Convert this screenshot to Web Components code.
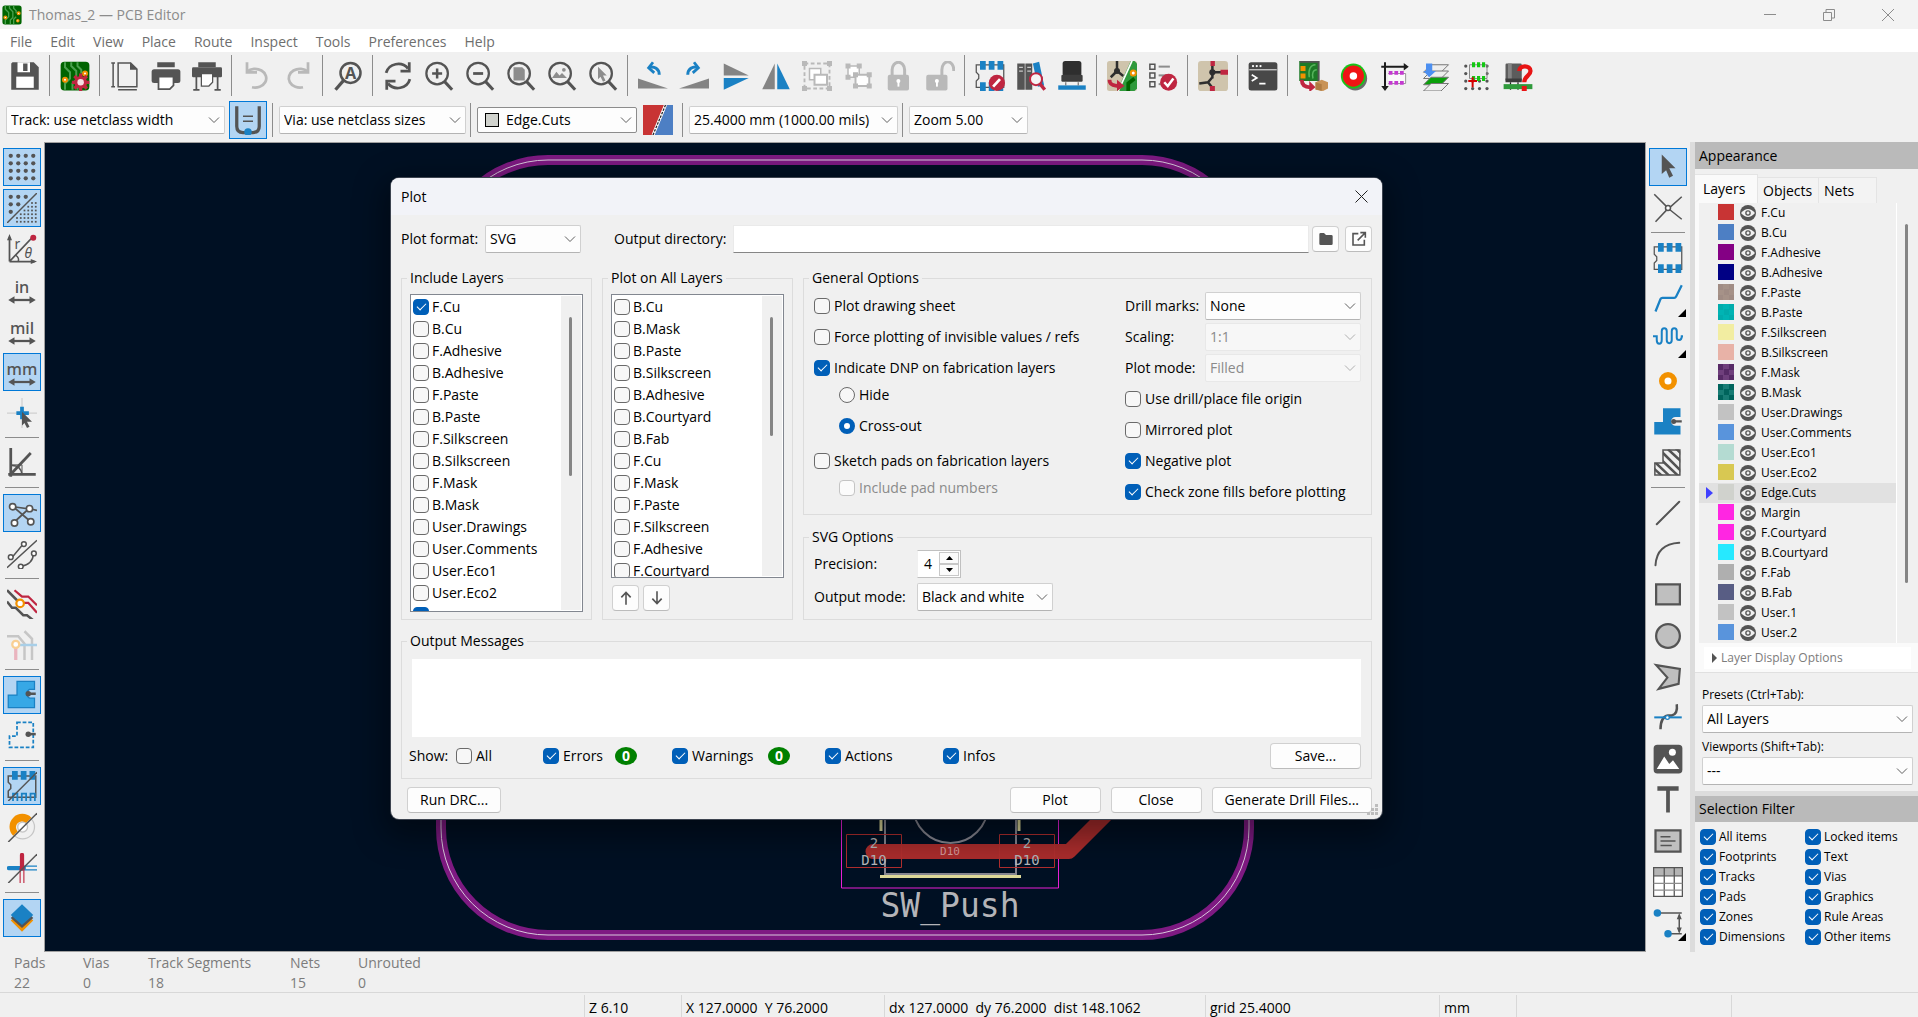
<!DOCTYPE html>
<html lang="en">
<head>
<meta charset="utf-8">
<title>Thomas_2 — PCB Editor</title>
<style>
  html, body { margin: 0; height: 100%; overflow: hidden; }
  body { font: 14px/20px "Open Sans", "Noto Sans", "Liberation Sans", sans-serif; color: #1a1a1a; background: #f0f0f0; }
</style>
</head>
<body>
<pcb-editor></pcb-editor>

<script>
/* ---------- icons, all on a 24 x 24 grid ---------- */
const G = '#545454', B = '#1a81c4', D = '#b9b9b9', R = '#bf2641', O = '#f29100';

const line = (d, c = G, w = 2, extra = '') =>
  `<path d="${d}" fill="none" stroke="${c}" stroke-width="${w}" ${extra}/>`;
const shape = (d, c = G) => `<path d="${d}" fill="${c}"/>`;
const box = (x, y, w, h, c = G, rx = 0) =>
  `<rect x="${x}" y="${y}" width="${w}" height="${h}" rx="${rx}" fill="${c}"/>`;
const dot = (x, y, r, c = G) => `<circle cx="${x}" cy="${y}" r="${r}" fill="${c}"/>`;
const ring = (x, y, r, c = G, w = 2, f = 'none') =>
  `<circle cx="${x}" cy="${y}" r="${r}" fill="${f}" stroke="${c}" stroke-width="${w}"/>`;
const lens = inner => ring(10.5, 10, 8.6, G, 1.8) + line('M16.500 16.500L22.500 23', G, 2.4) + `<g transform="translate(-2 .5)">${inner}</g>`;

// green board tile with a few traces
const board = box(0.5, 0.5, 23, 23, '#006400', 3) +
  line('M4 1v4l4 4v5l-4 4v5M9 1v3l4 4v7l-3 3v5M14 1v3l3 3v3M17 14l-3 3v6', '#4aa04e', 1.6) +
  ring(20, 10, 1.6, O, 1.6, '#fff') + ring(4, 15, 1.6, O, 1.6, '#fff') + ring(19, 19, 1.4, O, 1.4, '#fff');

const chip = c =>
  line('M1 3h22v18H1v-5l2-2v-3L1 9z', G, 1) +
  [4, 11, 18].map(x => box(x, 0, 4.6, 7, c) + box(x, 17, 4.6, 7, c)).join('');

const unit = t => `<text x="12" y="14.500" text-anchor="middle" font-family="Noto Sans, sans-serif" font-weight="500" font-size="13" fill="${G}">${t}</text>` +
  line('M4 20h16', G, 1.8) + shape('M1 20l5-3v6zM23 20l-5-3v6z');

const grid = (xs, ys, r, keep = () => true) =>
  ys.flatMap(y => xs.filter(x => keep(x, y)).map(x => dot(x, y, r))).join('');

const lock = (shackle, x = 0) => line(shackle, D, 2.4) + box(3 + x, 11, 17, 12.5, D, 1.5) +
  dot(11.5 + x, 16, 1.6, '#fff') + box(10.8 + x, 16, 1.5, 4.5, '#fff');

const zone = (fill, edge) => `<path d="M8 1h14v6.500h-4a4 4 0 0 0 0 7h4V22H1V12h7z" fill="${fill}" stroke="${edge}" stroke-width="1"/>` +
  dot(17, 11, 2.2) + box(17, 10, 6, 2);

const ICONS = {
  app: board,
  save: shape('M2 1h17l4 4v18H1V2z') + box(6, 1, 10, 8, '#fff') + box(10.500, 2, 3.500, 6) + box(5, 12.500, 14, 9, '#fff'),
  setup: board + dot(16.500, 17, 5, R) + line('M16.500 10v14M9.500 17h14M11.500 12l10 10M21.500 12l-10 10', R, 2.6) + dot(16.500, 17, 2.600, '#f3e0e4'),
  page: line('M6.500 1.500h10l5 5v14h-15z', G, 1.2) + shape('M16 1l6 6h-6z') + line('M2.500 1.500v19M1 1.500h3M1 20.500h3M6.500 22.900h15', G, 1.2),
  print: box(5, 1, 14, 4) + box(0.500, 6.500, 23, 11, G, 2) + `<path d="M6 12.500h12v7l-3 3H6z" fill="#fff" stroke="${G}" stroke-width="1.400"/>`,
  plotter: box(5, 1, 14, 4) + box(0, 5, 24, 8, G, 1) + line('M3.500 12v11M20.500 12v11M1 23h5M18 23h5', G, 1.4) + `<path d="M7.500 10h9v7l-3 3h-6z" fill="#fff" stroke="${G}"/>`,
  undo: line('M4 8.500h0a9 7.500 0 1 1 4 12.500', D, 2.2) + line('M4 1v8h8', D, 2.2),
  redo: line('M20 8.500h0a9 7.500 0 1 0-4 12.500', D, 2.2) + line('M20 1v8h-8', D, 2.2),
  find: ring(14, 9.500, 8, G, 2) + line('M8.500 15.500L2 23', G, 2.6) +
    `<text x="14" y="14.500" text-anchor="middle" font-family="Noto Sans, sans-serif" font-weight="700" font-size="13" fill="${G}">A</text>`,
  refresh: line('M2.500 9.500A10 9.500 0 0 1 20 6M21.500 14.500A10 9.500 0 0 1 4 18', G, 2.2) + line('M21 1v7h-7M3 23v-7h7', G, 2.2),
  zoomIn: lens(line('M12.500 5.500v8M8.500 9.500h8', G, 2)),
  zoomOut: lens(line('M8.500 9.500h8', G, 2.2)),
  zoomPage: lens(shape('M8 4.500h7l2 2v8.500H8z', '#8d8d8d')),
  zoomObjects: lens(shape('M6 13l3.500-5 2.500 3 2-2 4 4z', '#8d8d8d') + dot(15.500, 6.500, 1.500, '#8d8d8d')),
  zoomSelect: lens(shape('M10 4l7 7h-3l2 4-2 1-2-4-2 2z', '#8d8d8d')),
  rotateLeft: shape('M0 14v8h24z', '#848484') + line('M17 11c0-5-4-7-8-6', B, 2.4) + line('M12 1L8.500 5.500l4.500 4', B, 2.2),
  rotateRight: shape('M24 14v8H0z', '#848484') + line('M7 11c0-5 4-7 8-6', B, 2.4) + line('M12 1l3.500 4.500-4.500 4', B, 2.2),
  flip: shape('M3 2v9.500h20z', '#848484') + shape('M3 23v-9.500h20z', B),
  mirror: shape('M11 2v20.500H1z', '#848484') + shape('M13 2v20.500h10z', B),
  group: line('M2 2h20v20H2z', D, 1.5, 'stroke-dasharray="3 2"') + `<path d="M6 6h9v9H6z" fill="#fff" stroke="${D}" stroke-width="1.200"/><path d="M10 11h10v8H10z" fill="#fff" stroke="${D}" stroke-width="1.600"/>` +
    box(0, 0, 4, 4, D) + box(20, 0, 4, 4, D) + box(0, 20, 4, 4, D) + box(20, 20, 4, 4, D),
  ungroup: `<path d="M4 4h9v9H4z" fill="#fff" stroke="${D}" stroke-width="1.200"/><path d="M10 11h11v9H10z" fill="#fff" stroke="${D}" stroke-width="1.600"/>` +
    [[2, 2], [11, 2], [2, 11], [8, 9], [19, 9], [8, 18], [19, 18]].map(p => box(p[0], p[1], 4, 4, D)).join(''),
  lock: lock('M6.500 12V7a5 6 0 0 1 10 0v5'),
  unlock: lock('M13.500 12V7a4.500 6 0 0 1 9.500 0v1', -2),
  footprintEdit: chip(B) + dot(17.500, 17.500, 6.500, R) + line('M14.500 20.500l5.500-6', '#fff', 2.2),
  library: box(1, 2, 6, 21) + box(7.500, 2, 5.500, 21) + line('M2.500 5h3M2.500 8h3M9 5h3M9 8h3', '#c8c8c8', 1) + shape('M13.500 2l5-1.500 4 19-5 1z', B) +
    ring(16, 14.500, 4.800, R, 1.6, '#f4f4f4') + line('M19 18l4 5', R, 2.8),
  footprint: box(4.500, 0, 15, 12, '#2e2e2e', 2) + box(3.500, 11, 17, 5.500, '#3c3c3c', 1) + box(1, 19.500, 22, 3.500, B) + line('M7 17v2.500M17 17v2.500', '#777', 1),
  updatePcb: box(0, 0, 24, 24, '#cfc4ac', 2) + shape('M19 0h3l2 2v20l-2 2H8z', '#2f9a3c') + line('M8 0v8l5 4M8 8l-5 5', '#2e2e2e', 2) + dot(8, 8, 2.400, '#2e2e2e') +
    line('M20 0L9 24', '#fff', 1.4) + line('M17 24v-6l5-4', '#006400', 3) + ring(21, 9.500, 2, O, 1.6, '#fff') +
    line('M2 15c0 4 3 5 8 5', R, 3) + shape('M8 15l6 5-6 4z', R),
  drc: [2.500, 9.500, 16.500].map(y => line(`M1.500 ${y}h4v4h-4z`, G, 1.2) + line(`M8.500 ${y + 2}h9`, '#8d8d8d', 1.6)).join('') +
    dot(16.500, 17, 6.800, R) + line('M13 17l2.800 3 4.500-6', '#fff', 2),
  schematic: box(0, 0, 24, 24, '#cfc4ac', 2.500) + line('M11.500 3v11M1 18l7-1 3.500-4M11.500 9h8M8 17l4 5', '#2e2e2e', 2) + dot(11.500, 9, 2.500, '#2e2e2e') +
    box(10, 0, 3.500, 4, R) + box(18, 7, 6, 4, R) + box(9.500, 20, 4, 4, R),
  console: box(0.500, 1, 23, 22.500, '#484848', 2) + line('M1 7h22', '#cfcfcf', 1) + dot(4, 4, 0.900, '#fff') + dot(7, 4, 0.900, '#fff') + dot(10, 4, 0.900, '#fff') +
    line('M3 11l4 2.500-4 2.500M9 18h5', '#fff', 1.4),
  fabrication: box(1, 0, 15, 16, '#1d7a26') + line('M1.500 0.500h15v16', '#555', 1.6) + line('M14 3c-4 0-6 4-5 10M15 7c-3 0-4 3-3 7', '#58b45e', 1.2) + box(2, 4, 4, 4, O) + box(2, 10, 4, 4, O) +
    line('M3 15c0 4 2 6 7 6', R, 3) + shape('M9 16l5 5-5 4z', R) + shape('M14 17l5-2 5 2v5l-4 2-6-1z', '#c99356') + shape('M14 17l5 1.500V24l-5-1.500z', '#b07c42'),
  teardrop: dot(13, 14, 9.500, '#6c6c6c') + dot(11.500, 12, 10, '#19c319') + dot(11.500, 12, 8.500, '#f01414') + dot(11.500, 12, 3, '#fff'),
  origin: line('M1 4.500h19M4 1v20', '#1c1c1c', 1.6) + shape('M23 4.500l-4-3v6zM4 24l-3-4h6z', '#1c1c1c') + box(6.500, 9, 14, 9, '#fafafa') + line('M6.500 10h14v8h-14', '#999', 0.8) +
    [7, 11.500, 16].map(x => box(x, 8, 3, 3, '#c33ad0') + box(x, 16, 3, 3, '#c33ad0')).join(''),
  stackup: [[3, '#eee'], [8, '#eee'], [13, '#0aa00a'], [18, '#eee']].map(([y, c]) =>
    `<path d="M8 ${y}h14l-6 6H2z" fill="${c}" stroke="#777" stroke-width="0.800"/>`).join('') + shape('M4 2h5v6h3l-5.500 5L2 8h2z', '#4c8ff0'),
  array: grid([3, 8.500, 14, 20], [4, 10, 16, 22], 1.300) + box(6, 3, 13, 10, '#ebebeb') + line('M6 3h14v11H6z', '#888', 0.8) +
    [8, 12, 16].map(x => box(x, 1, 2.500, 4, '#12c812') + box(x, 12, 2.500, 4, '#12c812')).join('') + line('M8.500 13v8M5 16h7', '#d40000', 1.6),
  partHelp: box(2, 2, 13, 14, '#5c5c5c', 1) + box(4, 2, 3, 14, '#848484') + box(2, 14, 13, 3, '#3c3c3c') + line('M6 17v6M12 17v6', '#222', 1) + box(0.500, 18.500, 23, 4, '#2f9a3c') +
    line('M13 8c0-5 9-5 9 0 0 4-5 4-5 9', '#e81414', 3.4) + box(15, 20, 4, 4, '#e81414'),

  autoWidth: line('M3 1v16q0 5 5 5h8q5 0 5-5V1', G, 2.6) + line('M8 9h8M8 13h8', G, 1.2) + dot(12, 21.500, 3, B),
  layerPair: shape('M0 0h19L9 24H0z', '#c83434') + shape('M19 0h5v24H9z', '#4d7fc4') + line('M18 0L8 24', '#fff', 2.4) + line('M18 0L8 24', '#222', 1, 'stroke-dasharray="2 1"'),

  gridDots: grid([3, 9, 15, 21], [3, 9, 15, 21], 1.700),
  gridOverride: grid([3, 9, 15], [3, 9, 15], 1.700, (x, y) => x + y < 20) + line('M0 24L24 0', G, 1.2) +
    [8, 11, 14, 17, 20, 23].map(x => [8, 11, 14, 17, 20, 23].filter(y => x + y > 27).map(y => box(x - 0.700, y - 0.700, 1.400, 1.400)).join('')).join(''),
  polar: line('M2 22V3M2 22h20M2 22L20 3', G, 1.4) + shape('M2 0l2 5H0zM24 22l-5 2v-4z') + dot(21, 3, 2.400, R) + line('M7 17q3 2 2 5', G, 1.2) +
    `<text x="6" y="12" font-family="Noto Sans, sans-serif" font-size="11" fill="${G}">r</text><text x="14" y="19" font-family="Noto Sans, sans-serif" font-style="italic" font-size="11" fill="${G}">θ</text>`,
  inches: unit('in'), mils: unit('mil'), millimetres: unit('mm'),
  cursor: line('M0 12h24M12 0v24', '#cfcfcf', 1) + line('M7.500 12h10M12 7v10', B, 3) + shape('M12 11l8 8h-4l2 4-2 1-2-4-2 2z'),
  angle: line('M3 0v23M1 21h22', G, 2.2) + line('M3 21L19 4', G, 2.2) + line('M4 14q7 0 8 7', G, 1.2) + line('M4 13.500h8V21', G, 0.8),
  ratsnest: line('M5 7l15 2 4 1M5 7l14 12M18 8L5 20', G, 1.4) + ring(4.500, 7, 2.500, G, 1.3, '#fff') + ring(18, 8.500, 2.500, G, 1.3, '#fff') + ring(6, 20, 2.500, G, 1.3, '#fff') + ring(19, 19, 2.500, G, 1.3, '#fff'),
  curvedRats: line('M3 16L13 4M0 23L24 1', G, 1.2) + ring(13.500, 4, 1.900, G, 1.2, '#fff') + ring(3, 14.500, 1.900, G, 1.2, '#fff') +
    line('M21 12q0 8-10 10', G, 1.2) + ring(21.500, 11.500, 1.900, G, 1.2, '#fff') + ring(11, 22, 1.900, G, 1.2, '#fff'),
  netTracks: line('M6 1l6 5h5l7 7M12 11h5l7 8', R, 1.8) + line('M0 1l9 9M0 10l4 5h3l6 6h3l5 4', G, 2) + ring(10.500, 11.500, 3, O, 1.8, '#fff'),
  netFade: line('M0 5h9l5 6v13M14 1l6 6v17', '#c6c6c6', 2) + line('M7 12v12', '#eab4be', 2.6) + line('M8 12h16', '#a8cfe8', 2) + ring(7, 11.500, 2.800, '#f9cf93', 1.8, '#fff'),
  zoneFill: zone('#37a8e6', B),
  zoneOutline: line('M8 1h13v20H2V12h6z', B, 1.4, 'stroke-dasharray="3 1.500"') + dot(17, 10.500, 2.200) + box(17, 9.500, 6, 2),
  padSketch: line('M1 4h22v17H1v-5l2-2v-3L1 9z', G, 1.2) + [4, 11, 18].map(x => box(x, 0, 4.600, 7, B) + line(`M${x + 0.800} 24v-6h3.500v6`, B, 1.4)).join('') + line('M1 24L24 1', G, 1.2),
  viaSketch: ring(12.500, 12, 9.500, '#c6c6c6', 1) + shape('M5 19A10 10 0 0 1 19.500 4.500L15 9a4.500 4.500 0 0 0-6.500 6.500z', O) +
    ring(12.500, 12, 4, '#c6c6c6', 1) + dot(12.500, 12, 3, '#fff') + line('M1 24L24 1', G, 1.2),
  trackSketch: line('M1.500 12h12', B, 3.4, 'stroke-linecap="round"') + line('M12 10.500h12M12 13.500h12', B, 0.9) + line('M12 1.500v11', R, 3.4, 'stroke-linecap="round"') + line('M10.500 12v12M13.500 12v12', R, 0.9) + line('M1 24L24 1', G, 1.2),
  layersPanel: shape('M12 6l9 8-9 9-9-9z', O) + shape('M12 3l9 9-9 8-9-8z') + shape('M12 1l9 8.500-9 8-9-8z', B),

  select: shape('M7 2l11 11h-5l3 6-3 1.500-2.500-6L7 17.500z'),
  crossProbe: line('M1 1l9.500 9.500M23 3l-9.500 8.500M2 23l9-9.500M23 21l-10-8', G, 1.2) + ring(12, 12, 2, G, 1.2, '#fff'),
  footprintAdd: chip(B),
  route: line('M2 22l4-10q.5-1 1.500-1h9.500q1 0 1.500-1L23 1', B, 1.8),
  tune: line('M0 9h3v3q0 3 2 3t2-3V5q0-2.500 2-2.500T11 5v7q0 2.500 2 2.500t2-2.500V5q0-2.500 2-2.500T19 5v5q0 2 2 2t2-3h1', B, 1.6),
  via: ring(12, 12, 5, O, 4.4, '#fff'),
  zoneAdd: shape('M8 1h14v7h-4a3.500 3.500 0 0 0 0 7h4v7H1V12h7z', B) + dot(16.500, 11.500, 2) + box(17, 10.600, 6, 1.800),
  keepout: `<clipPath id="k"><path d="M8 1h14v21H1V12h7z"/></clipPath><g clip-path="url(#k)">` + line('M-2 8l18 17M3 6l19 18M6 2l18 18M12 1l14 13M18 0l8 8M-2 14l10 9', G, 2) + '</g>' + line('M8 1.500h13.500v20H1.500V12H8z', G, 1.2),
  line: line('M3 21L21 3', G, 1.6, 'stroke-linecap="round"'),
  arc: line('M2 21Q3 4 21 3', G, 1.6, 'stroke-linecap="round"'),
  rect: `<path d="M2.500 3.500h19v16h-19z" fill="#bfbfbf" stroke="${G}" stroke-width="1.800"/>`,
  circle: ring(12, 12, 9.500, G, 1.8, '#bfbfbf'),
  polygon: `<path d="M2.500 2.500l19 3-1 12-16 4 7-9z" fill="#bfbfbf" stroke="${G}" stroke-width="1.700"/>`,
  bezier: line('M19 1q1 8-4 9h-3q-6 1-6 11', G, 2) + line('M1 11.500h22', B, 1.6) + ring(11.500, 11.500, 1.500, B, 1, '#fff'),
  image: box(0.500, 0.500, 23, 23, G, 3) + dot(15.500, 6.500, 2.800, '#fff') + shape('M3 20l6-10 4 6 3-3 5 7z', '#fff'),
  text: shape('M3.500 1h17v3.500h-7V22h-3V4.500h-7z'),
  textbox: `<path d="M2 3.500h20v17H2z" fill="#bfbfbf" stroke="${G}" stroke-width="1.800"/>` + line('M6 8.500h8M6 12h12M6 15.500h9', G, 1.2),
  table: box(0.500, 0.500, 23, 23, '#fff') + box(0.500, 0.500, 23, 6, '#b4b4b4') + line('M.5.5h23v23H.5zM.5 7h23M9 0v24M17 0v24', G, 1) + line('M.5 13h23M.5 18.500h23', '#8d8d8d', 1),
  dimension: line('M4 4h19M11 20.500h12M21 6v13', G, 1.2) + shape('M21 4l2 5h-4zM21 20.500l2-5h-4z') + dot(3.500, 4, 3, B) + dot(12, 20.500, 3, B),

  folder: shape('M2 5q0-2 2-2h5l3 3h8q2 0 2 2v11q0 2-2 2H4q-2 0-2-2z'),
  external: line('M11 4H3v17h17v-8', G, 2.4) + line('M10 14L21 3M14 2.500h7.500V10', G, 2.4),
  up: line('M12 22V4M5 11l7-7.500 7 7.500', G, 2.4),
  down: line('M12 2v18M5 13l7 7.500 7-7.500', G, 2.4),
  eye: dot(12, 12, 12) + shape('M1.500 12q10.500-12 21 0-10.500 12-21 0z', '#f0f0f0') + ring(12, 12, 3.200, G, 2, '#f0f0f0'),
};

const icon = (name, size) =>
  `<svg width="${size}" height="${size}" viewBox="0 0 24 24" aria-hidden="true">${ICONS[name]}</svg>`;

const BASE = `
  *{ box-sizing:border-box; }
  svg{ display:block; flex:none; }
  button, input, select, textarea{ font:inherit; color:inherit; margin:0; }
`;

/* Base class: subclasses return css() and html() */
class Widget extends HTMLElement {
  connectedCallback() {
    if (this.shadowRoot) return;
    this.attachShadow({ mode: 'open' }).innerHTML = `<style>${BASE}${this.css()}</style>${this.html()}`;
  }
  attr(name, fallback = '') { return this.getAttribute(name) || fallback; }
}

/* <tool-button icon label [pressed] [disabled] [menu]> */
customElements.define('tool-button', class extends Widget {
  css() {
    return `
      :host{ display:grid; place-items:center; width:41px; height:41px; flex:none; }
      button{ position:relative; display:grid; place-items:center; width:38px; height:38px; padding:0; border:1px solid transparent; background:none; }
      button[aria-pressed=true]{ background:#b3d5f3; border-color:#0078d7; }
      .corner{ position:absolute; right:0; bottom:0; border:4px solid; border-color:transparent #000 #000 transparent; }`;
  }
  html() {
    return `<button type="button" aria-label="${this.attr('label')}" aria-pressed="${this.hasAttribute('pressed')}"${this.hasAttribute('disabled') ? ' disabled' : ''}>
      ${icon(this.attr('icon'), 30)}${this.hasAttribute('menu') ? '<span class="corner"></span>' : ''}</button>`;
  }
});

/* <tool-strip tools="save | setup ..."> : "|" is a separator, "*" pressed, "!" disabled, "+" has a palette */
customElements.define('tool-strip', class extends Widget {
  css() {
    return `
      :host{ display:flex; flex:none; padding:3px 4px; background:#f0f0f0; }
      :host([vertical]){ flex-direction:column; align-items:center; width:44px; padding:4px 0; }
      i{ display:flex; flex:none; width:9px; height:41px; justify-content:center; }
      i::after{ content:""; width:1px; background:#8c8c8c; }
      :host([vertical]) i{ width:34px; height:9px; align-items:center; }
      :host([vertical]) i::after{ width:34px; height:1px; }`;
  }
  html() {
    return this.attr('tools').trim().split(/\s+/).map(t => {
      if (t === '|') return '<i></i>';
      const name = t.replace(/[*!+]/g, '');
      return `<tool-button icon="${name}" label="${name}"${t.includes('*') ? ' pressed' : ''}${t.includes('!') ? ' disabled' : ''}${t.includes('+') ? ' menu' : ''}></tool-button>`;
    }).join('');
  }
});

/* <combo-box label value [name] [disabled] [swatch]> */
customElements.define('combo-box', class extends Widget {
  css() {
    return `
      :host{ display:flex; align-items:center; }
      label{ flex:none; width:var(--label-width, auto); margin-right:var(--label-gap, 0); }
      .box{ flex:1; display:grid; min-width:0; height:var(--combo-height, 28px); }
      .box > *{ grid-area:1/1; }
      select{ appearance:none; width:100%; padding:0 24px 0 4px; border:1px solid #d0d0d0; border-bottom-color:#b4b4b4; border-radius:2px; background:#fdfdfd; color:#000; opacity:1; }
      :host([swatch]) select{ padding-left:28px; border-color:#8c8c8c; }
      select:disabled{ background:#f7f7f7; border-color:#e8e8e8; color:#8a8a8a; }
      svg{ align-self:center; justify-self:end; margin-right:5px; pointer-events:none; }
      b{ align-self:center; width:14px; height:14px; margin-left:8px; border:1px solid #000; background:var(--swatch); pointer-events:none; }`;
  }
  html() {
    const name = this.attr('name');
    return `${name ? `<label for="c">${name}</label>` : ''}
      <span class="box"><select id="c"${name ? '' : ` aria-label="${this.attr('label', this.attr('value'))}"`}${this.hasAttribute('disabled') ? ' disabled' : ''}><option>${this.attr('value')}</option></select>
      <svg width="12" height="12" viewBox="0 0 12 12"><path d="M1 3.500l5 5 5-5" fill="none" stroke="${this.hasAttribute('disabled') ? '#b0b0b0' : '#606060'}"/></svg>
      ${this.hasAttribute('swatch') ? `<b style="--swatch:${this.attr('swatch')}"></b>` : ''}</span>`;
  }
});

/* <check-box [checked] [disabled] [radio] [label]>Label</check-box> */
customElements.define('check-box', class extends Widget {
  css() {
    return `
      :host{ display:flex; align-items:center; }
      label{ display:flex; align-items:center; gap:var(--check-gap, 4px); white-space:nowrap; }
      input{ appearance:none; flex:none; display:grid; place-items:center; width:16px; height:16px; border:1px solid #6a6a6a; border-radius:4px; background:#f7f7f7; }
      input:checked{ background:#005fb8; border-color:#005fb8; }
      input[type=checkbox]:checked::after{ content:""; width:8px; height:4px; margin-top:-3px; border:solid #fff; border-width:0 0 1px 1px; transform:rotate(-45deg); }
      input[type=radio]{ border-radius:50%; }
      input[type=radio]:checked{ background:#fff; border-width:5px; }
      input:disabled{ border-color:#c4c4c4; background:#fbfbfb; }
      :host([disabled]) label{ color:#8a8a8a; }`;
  }
  html() {
    const type = this.hasAttribute('radio') ? 'radio' : 'checkbox';
    const label = this.attr('label');
    return `<label><input type="${type}"${label ? ` aria-label="${label}"` : ''}${this.hasAttribute('checked') ? ' checked' : ''}${this.hasAttribute('disabled') ? ' disabled' : ''}><slot></slot></label>`;
  }
});

/* <group-box name="General Options">...</group-box> */
customElements.define('group-box', class extends Widget {
  css() {
    return `
      :host{ display:grid; min-width:0; }
      fieldset{ min-width:0; margin:0; padding:0; border:1px solid #dcdcdc; }
      legend{ margin-left:5px; padding:0 3px; line-height:20px; }
      div{ padding:var(--pad, 0); }`;
  }
  html() { return `<fieldset><legend>${this.attr('name')}</legend><div><slot></slot></div></fieldset>`; }
});

/* <push-button [icon]>Label</push-button> */
customElements.define('push-button', class extends Widget {
  css() {
    return `
      :host{ display:grid; height:26px; min-width:91px; }
      :host([icon]){ min-width:27px; }
      button{ display:grid; place-items:center; padding:0 12px; border:1px solid #d0d0d0; border-bottom-color:#bcbcbc; border-radius:4px; background:#fdfdfd; color:#000; line-height:20px; white-space:nowrap; }
      :host([icon]) button{ padding:0; }`;
  }
  html() {
    const name = this.attr('icon');
    return `<button type="button"${name ? ` aria-label="${this.attr('label', name)}"` : ''}>${name ? icon(name, 16) : '<slot></slot>'}</button>`;
  }
});

/* <layer-checks layers="F.Cu,B.Cu" checked="F.Cu" [next="Edge.Cuts"]> scrolling check list; next = row that only peeks in */
customElements.define('layer-checks', class extends Widget {
  css() {
    return `
      :host{ display:flex; height:var(--list-height); overflow:hidden; border:1px solid #828790; background:#fff; }
      .rows{ flex:1; padding:1px 0 0 2px; overflow:hidden; --check-gap:3px; }
      check-box{ height:22px; }
      .bar{ width:20px; margin:1px; padding:21px 0 0 8px; background:#f0f0f0; }
      .bar::before{ content:""; display:block; width:3px; height:var(--thumb); border-radius:2px; background:#858585; }`;
  }
  html() {
    const on = this.attr('checked').split(',');
    const next = this.attr('next');
    const rows = this.attr('layers').split(',').map(l => `<check-box${on.includes(l) ? ' checked' : ''}>${l}</check-box>`).join('');
    return `<div class="rows">${rows}${next ? `<check-box checked label="${next}"></check-box>` : ''}</div><div class="bar"></div>`;
  }
});

customElements.define('plot-dialog', class extends Widget {
  css() {
    return `
      :host{ display:block; background:#f0f0f0; border-radius:8px; overflow:hidden; color:#000; box-shadow:0 0 0 1px #3d4450, 0 10px 30px 8px rgba(0,0,0,.4); }
      header{ display:flex; align-items:center; justify-content:space-between; height:37px; padding:0 10px; background:#f2f3f8; }
      header button{ padding:4px; border:0; background:none; }
      .body{ padding:10px 10px 6px; }
      .row{ display:flex; align-items:center; }
      .format{ width:180px; --label-gap:6px; --label-width:78px; }
      .dir{ flex:none; width:119px; margin-left:33px; }
      .path{ flex:1; min-width:0; height:28px; padding:0 4px; border:1px solid #eaeaea; border-bottom-color:#868686; background:#fff; }
      .path + *{ margin:0 6px 0 3px; }
      .columns{ display:grid; grid-template-columns:191px 191px 1fr; gap:10px; margin-top:15px; }
      .layers{ --pad:6px 8px 7px; --list-height:318px; --thumb:159px; }
      .all{ --pad:6px 8px 7px; --list-height:284px; --thumb:119px; }
      .move{ display:flex; gap:4px; padding:7px 1px 0; }
      .options{ display:flex; flex-direction:column; gap:12px; }
      .general{ --pad:2px 10px 7px; }
      .two{ display:grid; grid-template-columns:1fr 236px; }
      .left{ display:grid; grid-template-rows:31px 31px 31px 23px 39px 31px 23px; }
      .right{ display:grid; grid-auto-rows:31px; --label-width:80px; }
      .sub{ margin-left:25px; }
      .svg{ --pad:3px 10px 8px; --label-width:103px; }
      .precision{ display:flex; align-items:center; margin-bottom:5px; }
      .precision label{ width:103px; }
      .spin{ display:flex; width:44px; height:28px; border:1px solid #c0c0c0; border-left-color:#f0f0f0; background:#fff; }
      .spin input{ width:20px; padding:0; border:0; text-align:center; background:none; }
      .spin span{ display:grid; width:22px; padding:1px; }
      .spin button{ display:grid; place-items:center; padding:0; border:1px solid #c8c8c8; background:#fbfbfb; }
      .mode{ width:239px; }
      .messages{ margin-top:11px; --pad:8px 10px 9px 7px; }
      textarea{ display:block; width:calc(100% - 3px); height:78px; margin-left:3px; padding:4px; border:0; background:#fff; resize:none; }
      .show{ display:flex; align-items:center; height:26px; margin-top:6px; }
      .show > :first-child{ width:47px; }
      .show > :last-child{ margin-left:auto; }
      .all-msg{ width:87px; }
      .errors{ width:72px; }
      .warnings{ width:96px; }
      .actions{ width:118px; }
      .badge{ width:22px; height:18px; margin-right:35px; border-radius:50%; background:#008000; color:#fff; font-weight:700; line-height:18px; text-align:center; }
      footer{ display:flex; gap:10px; padding:8px 0 0 6px; }
      footer :first-child{ margin-right:auto; }
      .grip{ position:absolute; right:4px; bottom:4px; }`;
  }
  html() {
    return `
      <header>Plot<button type="button" aria-label="Close"><svg width="13" height="13" viewBox="0 0 13 13"><path d="M.5.5l12 12M12.500.5l-12 12" stroke="#222" fill="none"/></svg></button></header>
      <div class="body">
        <div class="row">
          <combo-box class="format" name="Plot format:" value="SVG"></combo-box>
          <label class="dir" for="dir">Output directory:</label><input class="path" id="dir">
          <push-button icon="folder"></push-button><push-button icon="external"></push-button>
        </div>
        <div class="columns">
          <group-box class="layers" name="Include Layers">
            <layer-checks checked="F.Cu" next="Edge.Cuts" layers="F.Cu,B.Cu,F.Adhesive,B.Adhesive,F.Paste,B.Paste,F.Silkscreen,B.Silkscreen,F.Mask,B.Mask,User.Drawings,User.Comments,User.Eco1,User.Eco2"></layer-checks>
          </group-box>
          <group-box class="all" name="Plot on All Layers">
            <layer-checks layers="B.Cu,B.Mask,B.Paste,B.Silkscreen,B.Adhesive,B.Courtyard,B.Fab,F.Cu,F.Mask,F.Paste,F.Silkscreen,F.Adhesive,F.Courtyard"></layer-checks>
            <div class="move"><push-button icon="up"></push-button><push-button icon="down"></push-button></div>
          </group-box>
          <div class="options">
            <group-box class="general" name="General Options"><div class="two">
              <div class="left">
                <check-box>Plot drawing sheet</check-box>
                <check-box>Force plotting of invisible values / refs</check-box>
                <check-box checked>Indicate DNP on fabrication layers</check-box>
                <check-box class="sub" radio>Hide</check-box>
                <check-box class="sub" radio checked>Cross-out</check-box>
                <check-box>Sketch pads on fabrication layers</check-box>
                <check-box class="sub" disabled>Include pad numbers</check-box>
              </div>
              <div class="right">
                <combo-box name="Drill marks:" value="None"></combo-box>
                <combo-box name="Scaling:" value="1:1" disabled></combo-box>
                <combo-box name="Plot mode:" value="Filled" disabled></combo-box>
                <check-box>Use drill/place file origin</check-box>
                <check-box>Mirrored plot</check-box>
                <check-box checked>Negative plot</check-box>
                <check-box checked>Check zone fills before plotting</check-box>
              </div>
            </div></group-box>
            <group-box class="svg" name="SVG Options">
              <div class="precision"><label for="precision">Precision:</label>
                <span class="spin"><input id="precision" value="4"><span>
                  <button type="button" aria-label="Increase"><svg width="7" height="4" viewBox="0 0 7 4"><path d="M0 4h7L3.500 0z"/></svg></button>
                  <button type="button" aria-label="Decrease"><svg width="7" height="4" viewBox="0 0 7 4"><path d="M0 0h7L3.500 4z"/></svg></button></span></span>
              </div>
              <combo-box class="mode" name="Output mode:" value="Black and white"></combo-box>
            </group-box>
          </div>
        </div>
        <group-box class="messages" name="Output Messages">
          <textarea aria-label="Output Messages"></textarea>
          <div class="show"><span>Show:</span>
            <check-box class="all-msg">All</check-box>
            <check-box class="errors" checked>Errors</check-box><span class="badge">0</span>
            <check-box class="warnings" checked>Warnings</check-box><span class="badge">0</span>
            <check-box class="actions" checked>Actions</check-box>
            <check-box checked>Infos</check-box>
            <push-button>Save...</push-button>
          </div>
        </group-box>
        <footer>
          <push-button>Run DRC...</push-button><push-button>Plot</push-button><push-button>Close</push-button><push-button>Generate Drill Files...</push-button>
        </footer>
      </div>
      <svg class="grip" width="11" height="11" viewBox="0 0 11 11"><path d="M8 0h3v3H8zM4 4h3v3H4zM8 4h3v3H8zM0 8h3v3H0zM4 8h3v3H4zM8 8h3v3H8z" fill="#bcbcbc"/></svg>`;
  }
});

customElements.define('board-view', class extends Widget {
  css() {
    return `
      :host{ display:block; min-width:0; min-height:0; overflow:hidden; border:1px solid #a0a0a0; background:#001023; }
      svg{ width:100%; height:100%; }
      text{ font-family:"DejaVu Sans Mono", monospace; text-anchor:middle; }`;
  }
  html() {
    return `<svg viewBox="45 143 1600 808" preserveAspectRatio="xMidYMid slice">
      <rect x="441" y="160" width="808" height="775" rx="107" fill="none" stroke="#7e1a82" stroke-width="10"/>
      <rect x="441" y="160" width="808" height="775" rx="107" fill="none" stroke="#d8c8dc"/>
      <path d="M841.500 780v108h217V780" fill="none" stroke="#e81fd6"/>
      <path d="M881 780v51M1019 780v51M880 876.500h141" fill="none" stroke="#dcd898" stroke-width="3"/>
      <path d="M885 780v94h131v-94" fill="none" stroke="#85858f" stroke-width="2"/>
      <circle cx="950.500" cy="805.500" r="37.500" fill="none" stroke="#85858f" stroke-width="2"/>
      <path d="M873 851.500h196l60-60" fill="none" stroke="#a92c2c" stroke-width="15" stroke-linecap="round" stroke-linejoin="round"/>
      <path d="M846.500 834.500h55v33h-55zM999.500 834.500h55v33h-55z" fill="none" stroke="#b02e2e"/>
      <g fill="#b4b4b8" font-size="14">
        <text x="874" y="848">2</text><text x="1027" y="848">2</text>
        <text x="874" y="865">D10</text><text x="1027" y="865">D10</text>
        <text x="950" y="855" font-size="11" fill="#d49a9a">D10</text>
        <text x="950" y="917" font-size="33">SW_Push</text>
      </g>
    </svg>`;
  }
});

// [name, colour, second colour of a translucent swatch]
const LAYERS = [
  ['F.Cu', '#c83434'], ['B.Cu', '#4d7fc4'], ['F.Adhesive', '#840084'], ['B.Adhesive', '#000084'],
  ['F.Paste', '#a69288', '#a08c84'], ['B.Paste', '#00b4b4', '#00acac'], ['F.Silkscreen', '#f2eda1'], ['B.Silkscreen', '#e8b2a7'],
  ['F.Mask', '#6f3f7c', '#572a66'], ['B.Mask', '#187c74', '#00645c'], ['User.Drawings', '#c2c2c2'], ['User.Comments', '#5994dc'],
  ['User.Eco1', '#b4dbd2'], ['User.Eco2', '#d8c852'], ['Edge.Cuts', '#d0d2cd'], ['Margin', '#ff26e2'],
  ['F.Courtyard', '#ff26e2'], ['B.Courtyard', '#26e9ff'], ['F.Fab', '#afafaf'], ['B.Fab', '#585d84'],
  ['User.1', '#c2c2c2'], ['User.2', '#5994dc'],
];

customElements.define('layer-list', class extends Widget {
  css() {
    return `
      :host{ display:flex; }
      ul{ flex:1; margin:0; padding:0; list-style:none; background:#f0f0f0; }
      li{ display:flex; align-items:center; gap:5px; height:20px; }
      li::before{ content:""; width:0; margin:0 2px 0 7px; border:5px solid transparent; border-width:6px 0 6px 7px; }
      li.current{ background:#e1e1e1; }
      li.current::before{ border-left-color:#4040ff; }
      i{ width:16px; height:16px; margin:0 1px 2px -2px; background:repeating-conic-gradient(var(--a) 0 25%, var(--b) 0 50%) 0 0/11px 11px; }
      .bar{ width:22px; padding:21px 0 0 8px; border-left:1px solid #fff; background:#f0f0f0; }
      .bar::before{ content:""; display:block; width:3px; height:359px; border-radius:2px; background:#858585; }`;
  }
  html() {
    return `<ul>${LAYERS.map(([name, a, b]) =>
      `<li${name === 'Edge.Cuts' ? ' class="current"' : ''}><i style="--a:${a};--b:${b || a}"></i>${icon('eye', 16)}<span>${name}</span></li>`).join('')}</ul><div class="bar"></div>`;
  }
});

customElements.define('side-panel', class extends Widget {
  css() {
    return `
      :host{ display:flex; flex-direction:column; background:#f0f0f0; border-left:5px solid #dcdcdc; font-size:12px; color:#000; }
      h2{ flex:none; height:27px; margin:0; padding:0 4px; background:#bababa; font-size:14px; font-weight:400; line-height:27px; }
      h2.filter{ height:31px; border-top:5px solid #dcdcdc; line-height:26px; }
      nav{ display:flex; align-items:flex-end; height:34px; padding-top:4px; font-size:14px; }
      nav button{ height:26px; padding:0 5px; border:1px solid #e4e4e4; border-width:1px 1px 0 0; background:#f3f3f3; color:#000; line-height:20px; text-align:left; }
      nav button.on{ height:29px; padding:0 8px; background:#fafafa; width:63px; }
      .objects{ width:61px; }
      .nets{ width:58px; }
      .page{ padding:0 0 3px 4px; background:#fafafa; border-bottom:1px solid #e0e0e0; }
      .more{ display:flex; align-items:center; gap:4px; height:22px; margin:4px 7px 0 5px; padding-left:8px; background:#fff; color:#7c7c7c; }
      .combos{ padding:12px 5px 2px 7px; }
      .combos p{ margin:0; line-height:20px; }
      combo-box{ margin-bottom:4px; font-size:14px; }
      .checks{ display:grid; grid-template-columns:105px 1fr; grid-auto-rows:20px; padding:5px 5px 0; --check-gap:3px; }`;
  }
  html() {
    const filters = ['All items', 'Locked items', 'Footprints', 'Text', 'Tracks', 'Vias', 'Pads', 'Graphics', 'Zones', 'Rule Areas', 'Dimensions', 'Other items'];
    return `
      <h2>Appearance</h2>
      <nav><button class="on" type="button">Layers</button><button class="objects" type="button">Objects</button><button class="nets" type="button">Nets</button></nav>
      <div class="page"><layer-list></layer-list>
        <div class="more"><svg width="5" height="10" viewBox="0 0 5 10"><path d="M0 0l5 5-5 5z" fill="#545454"/></svg>Layer Display Options</div>
      </div>
      <div class="combos">
        <p>Presets (Ctrl+Tab):</p><combo-box label="Presets (Ctrl+Tab)" value="All Layers"></combo-box>
        <p>Viewports (Shift+Tab):</p><combo-box label="Viewports (Shift+Tab)" value="---"></combo-box>
      </div>
      <h2 class="filter">Selection Filter</h2>
      <div class="checks">${filters.map(f => `<check-box checked>${f}</check-box>`).join('')}</div>`;
  }
});

customElements.define('pcb-editor', class extends Widget {
  css() {
    return `
      :host{ display:flex; flex-direction:column; height:100vh; }
      .title{ display:flex; align-items:center; gap:7px; flex:none; height:29px; padding:0 22px 0 2px; background:#f3f3f3; color:#8c8c8c; }
      .title span{ flex:1; }
      .title button{ display:grid; place-items:center; width:45px; height:29px; margin-left:7px; padding:0; border:0; background:none; }
      .title button:last-child{ margin-right:-14px; }
      .menu{ display:flex; gap:18px; flex:none; height:23px; padding:0 10px; background:#fff; line-height:25px; color:#6e6e6e; }
      .menu a{ color:inherit; text-decoration:none; }
      .bar{ display:flex; align-items:center; flex:none; height:43px; padding:0 6px 1px; }
      .bar hr{ width:1px; height:34px; margin:0 6px 0 4px; border:0; background:#8c8c8c; }
      .track{ width:219px; margin-right:2px; } .via{ width:187px; } .layer{ width:160px; --combo-height:26px; } .grid{ width:209px; } .zoom{ width:119px; }
      main{ flex:1; display:grid; grid-template-columns:44px minmax(0,1fr) 44px 228px; min-height:0; }
      .info{ display:flex; flex:none; height:41px; padding:1px 14px 0; color:#7c7c7c; border-bottom:1px solid #d8d8d8; }
      dl{ margin:0; } dd{ margin:0; }
      dl:nth-child(1){ width:69px; } dl:nth-child(2){ width:65px; } dl:nth-child(3){ width:142px; } dl:nth-child(4){ width:68px; }
      .status{ display:grid; flex:none; grid-template-columns:584fr 97fr 203fr 321fr 234fr 77fr 215fr 187fr; height:24px; color:#000; white-space:pre; }
      .status span{ min-width:0; margin-top:2px; padding-left:4px; border-left:1px solid #d8d8d8; line-height:25px; }
      .status span:first-child{ border:0; }
      plot-dialog{ position:absolute; left:391px; top:178px; width:991px; }`;
  }
  html() {
    const menus = ['File', 'Edit', 'View', 'Place', 'Route', 'Inspect', 'Tools', 'Preferences', 'Help'];
    const info = [['Pads', 22], ['Vias', 0], ['Track Segments', 18], ['Nets', 15], ['Unrouted', 0]];
    const status = ['', 'Z 6.10', 'X 127.0000  Y 76.2000', 'dx 127.0000  dy 76.2000  dist 148.1062', 'grid 25.4000', 'mm', '', ''];
    const win = d => `<svg width="14" height="14" viewBox="0 0 14 14"><path d="${d}" fill="none" stroke="#8c8c8c"/></svg>`;
    return `
      <div class="title">${icon('app', 20)}<span>Thomas_2 — PCB Editor</span>
        <button type="button" aria-label="Minimize">${win('M1 6.500h12')}</button>
        <button type="button" aria-label="Restore">${win('M1.500 4.500h8v8h-8zM4 4V1.500h8.500V10H10')}</button>
        <button type="button" aria-label="Close">${win('M1 1l12 12M13 1L1 13')}</button></div>
      <nav class="menu">${menus.map(m => `<a href="#">${m}</a>`).join('')}</nav>
      <tool-strip tools="save | setup | page print plotter | undo! redo! | find | refresh zoomIn zoomOut zoomPage zoomObjects zoomSelect
        | rotateLeft rotateRight flip mirror group! ungroup! lock! unlock! | footprintEdit library footprint | updatePcb drc | schematic | console
        | fabrication teardrop origin stackup array partHelp"></tool-strip>
      <div class="bar">
        <combo-box class="track" value="Track: use netclass width"></combo-box><tool-button icon="autoWidth" label="Automatic track width" pressed></tool-button><hr>
        <combo-box class="via" value="Via: use netclass sizes"></combo-box><hr>
        <combo-box class="layer" value="Edge.Cuts" swatch="#d0d2cd"></combo-box><tool-button icon="layerPair" label="Layer pair"></tool-button><hr>
        <combo-box class="grid" value="25.4000 mm (1000.00 mils)"></combo-box><hr>
        <combo-box class="zoom" value="Zoom 5.00"></combo-box>
      </div>
      <main>
        <tool-strip vertical tools="gridDots* gridOverride* polar inches mils millimetres* cursor | angle | ratsnest* curvedRats | netTracks netFade
          | zoneFill* zoneOutline | padSketch* viaSketch trackSketch | layersPanel*"></tool-strip>
        <board-view></board-view>
        <tool-strip vertical tools="select* crossProbe | footprintAdd route+ tune+ via zoneAdd keepout | line arc rect circle polygon bezier image text textbox table dimension+"></tool-strip>
        <side-panel></side-panel>
      </main>
      <div class="info">${info.map(([k, v]) => `<dl><dt>${k}</dt><dd>${v}</dd></dl>`).join('')}</div>
      <div class="status">${status.map(s => `<span>${s}</span>`).join('')}</div>
      <plot-dialog></plot-dialog>`;
  }
});
</script>
</body>
</html>
